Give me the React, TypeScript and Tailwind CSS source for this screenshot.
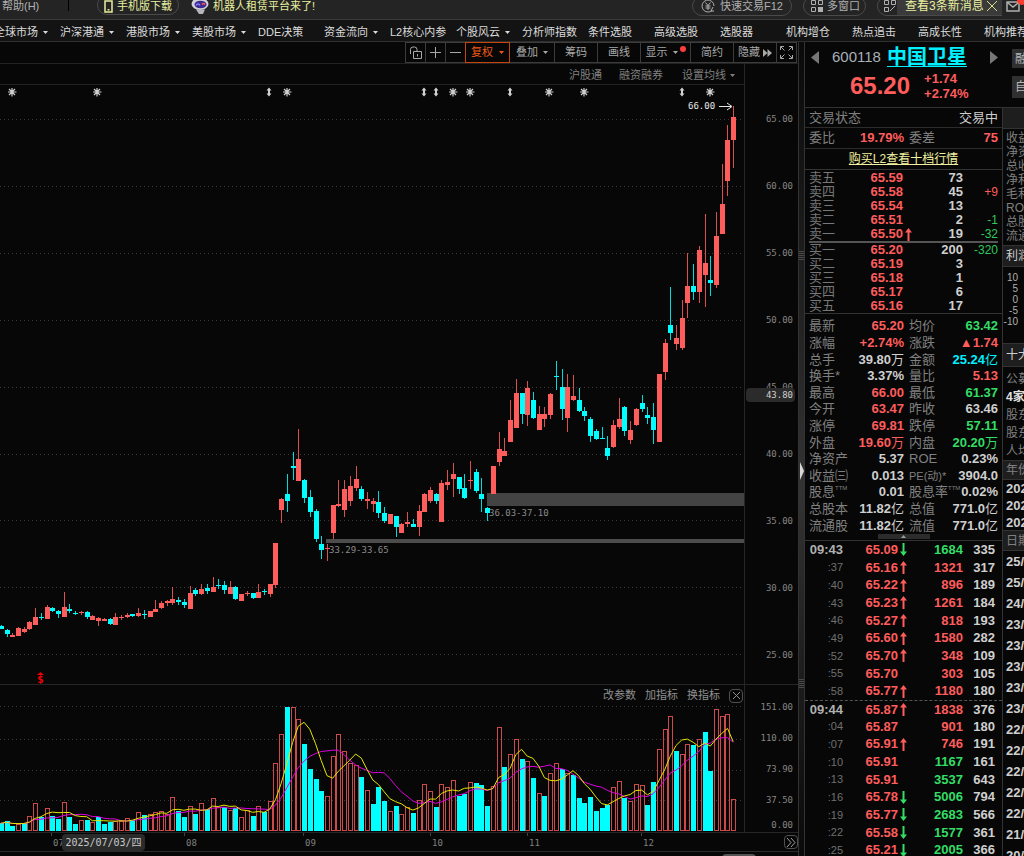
import type { ReactNode } from 'react'

type Tone = 'up' | 'down' | 'flat' | 'cyan'
// [high, body top, body bottom, low, rising, volume bar, volume rising]
type Candle = [number, number, number, number, number, number, number]

const TONES: Record<Tone, string> = {
  up: 'text-[#ff5c5c]',
  down: 'text-[#33dd66]',
  flat: 'text-[#cfcfcf]',
  cyan: 'text-[#00f0ff]',
}

const CANDLES: Candle[] = [
  [625, 626, 629, 629, 0, 23, 0], [629, 630, 634, 637, 0, 29, 0], [633, 635, 637, 637, 1, 16, 0], [627, 628, 636, 636, 1, 21, 1],
  [627, 629, 632, 633, 1, 24, 0], [621, 622, 629, 630, 1, 44, 1], [608, 617, 625, 625, 1, 84, 1], [613, 617, 618, 620, 0, 41, 0],
  [605, 607, 619, 619, 1, 68, 1], [607, 608, 611, 612, 0, 46, 0], [610, 611, 614, 618, 0, 35, 0], [592, 607, 617, 617, 1, 87, 1],
  [604, 609, 611, 613, 0, 41, 0], [611, 613, 614, 615, 0, 22, 0], [611, 612, 613, 615, 1, 32, 1], [611, 612, 617, 619, 0, 33, 0],
  [615, 616, 620, 620, 1, 26, 1], [617, 618, 621, 626, 1, 42, 0], [618, 619, 621, 621, 1, 21, 0], [618, 619, 624, 625, 0, 28, 0],
  [613, 617, 625, 625, 1, 31, 1], [615, 617, 618, 620, 1, 31, 1], [613, 615, 617, 618, 1, 38, 1], [614, 614, 616, 617, 0, 34, 0],
  [608, 613, 616, 617, 1, 56, 1], [610, 614, 615, 619, 0, 49, 0], [611, 611, 617, 617, 1, 51, 1], [600, 609, 612, 612, 1, 56, 1],
  [601, 603, 608, 609, 1, 59, 1], [600, 601, 603, 606, 1, 51, 1], [587, 599, 603, 605, 1, 101, 1], [597, 600, 602, 605, 0, 59, 0],
  [599, 602, 605, 608, 0, 41, 0], [586, 593, 609, 609, 1, 76, 1], [588, 590, 594, 596, 0, 51, 0], [584, 589, 594, 595, 1, 83, 1],
  [584, 588, 591, 594, 0, 65, 0], [577, 587, 592, 592, 1, 98, 1], [579, 585, 586, 589, 0, 71, 1], [581, 585, 590, 594, 0, 72, 0],
  [581, 587, 594, 594, 1, 63, 1], [586, 587, 599, 600, 0, 69, 0], [594, 594, 601, 601, 1, 41, 1], [591, 593, 594, 596, 1, 63, 1],
  [593, 593, 598, 599, 0, 44, 0], [584, 592, 598, 598, 1, 76, 1], [589, 591, 592, 595, 0, 57, 0], [584, 584, 594, 597, 1, 89, 1],
  [543, 543, 585, 588, 1, 203, 1], [498, 499, 510, 523, 1, 291, 1], [474, 494, 501, 512, 0, 371, 0], [452, 466, 468, 480, 0, 373, 1],
  [429, 459, 481, 481, 1, 335, 1], [479, 480, 498, 503, 0, 261, 0], [490, 497, 512, 517, 0, 186, 0], [509, 511, 539, 542, 0, 156, 0],
  [536, 544, 550, 559, 0, 120, 0], [544, 548, 549, 561, 1, 106, 1], [505, 505, 533, 539, 1, 224, 1], [480, 504, 506, 507, 1, 291, 1],
  [480, 489, 510, 517, 1, 239, 1], [476, 486, 501, 506, 1, 203, 1], [466, 479, 488, 491, 1, 198, 1], [486, 489, 499, 501, 0, 162, 0],
  [492, 499, 501, 509, 1, 122, 1], [498, 501, 504, 512, 1, 82, 0], [491, 502, 513, 518, 0, 132, 0], [507, 513, 521, 523, 0, 90, 0],
  [514, 514, 524, 524, 1, 59, 1], [516, 516, 527, 537, 0, 76, 0], [523, 524, 533, 533, 1, 51, 1], [512, 522, 524, 527, 1, 73, 1],
  [519, 524, 527, 527, 0, 55, 0], [505, 511, 527, 536, 1, 92, 1], [493, 494, 512, 512, 1, 140, 1], [487, 490, 501, 503, 1, 120, 1],
  [493, 494, 501, 504, 0, 71, 0], [480, 483, 522, 522, 1, 140, 1], [470, 482, 485, 490, 1, 131, 1], [463, 474, 479, 497, 1, 153, 1],
  [477, 477, 489, 494, 0, 105, 0], [474, 488, 498, 499, 0, 111, 0], [461, 480, 481, 489, 1, 147, 1], [469, 472, 491, 493, 0, 145, 0],
  [478, 494, 499, 512, 0, 137, 0], [507, 508, 513, 521, 0, 74, 0], [466, 466, 494, 494, 1, 134, 1], [432, 449, 462, 466, 1, 311, 1],
  [438, 451, 456, 456, 1, 192, 0], [400, 420, 442, 442, 1, 230, 1], [379, 393, 428, 428, 1, 277, 1], [393, 393, 414, 424, 0, 215, 0],
  [381, 388, 415, 426, 1, 209, 1], [392, 400, 418, 419, 0, 160, 0], [406, 414, 430, 430, 1, 113, 1], [407, 414, 419, 427, 1, 104, 0],
  [393, 394, 415, 419, 1, 173, 1], [361, 376, 377, 390, 0, 203, 1], [369, 387, 409, 420, 0, 186, 0], [374, 387, 418, 432, 1, 174, 1],
  [375, 396, 400, 401, 1, 168, 0], [388, 400, 411, 412, 0, 98, 0], [407, 411, 416, 421, 0, 84, 0], [417, 419, 436, 442, 0, 101, 0],
  [429, 431, 439, 440, 0, 60, 0], [427, 438, 439, 439, 0, 68, 0], [436, 448, 456, 460, 0, 79, 0], [420, 425, 447, 448, 1, 131, 1],
  [398, 419, 427, 429, 1, 150, 1], [406, 407, 431, 436, 0, 98, 0], [421, 430, 440, 444, 1, 89, 1], [408, 409, 425, 426, 1, 140, 1],
  [395, 403, 409, 412, 0, 137, 1], [407, 415, 418, 424, 0, 79, 0], [403, 417, 430, 444, 0, 148, 0], [374, 374, 442, 442, 1, 247, 1],
  [339, 343, 372, 380, 1, 305, 1], [287, 325, 333, 340, 0, 344, 1], [325, 338, 344, 350, 1, 239, 0], [300, 318, 348, 350, 1, 230, 1],
  [253, 286, 303, 318, 1, 260, 1], [264, 286, 292, 300, 0, 258, 0], [246, 250, 292, 303, 1, 277, 1], [214, 263, 275, 307, 1, 297, 0],
  [256, 280, 283, 296, 0, 181, 0], [212, 236, 285, 288, 1, 365, 1], [164, 204, 234, 234, 1, 344, 1], [125, 140, 181, 196, 1, 352, 1],
  [106, 117, 140, 168, 1, 97, 1],
]

const RED = '#ff5c5c'
const CYAN = '#00ffff'
const candleX = (i: number) => 0.8 + i * 5.722
const volumeY = (v: number) => 146 - v / 3

function average(days: number) {
  return CANDLES.map((_, i) => {
    const part = CANDLES.slice(Math.max(0, i - days + 1), i + 1)
    const mean = part.reduce((sum, c) => sum + c[5], 0) / part.length
    return `${candleX(i).toFixed(1)},${volumeY(mean).toFixed(1)}`
  }).join(' ')
}

const NAV = [
  ['全球市场', 1], ['沪深港通', 1], ['港股市场', 1], ['美股市场', 1], ['DDE决策', 0], ['资金流向', 1], ['L2核心内参', 0], ['个股风云', 1],
  ['分析师指数', 0], ['条件选股', 0], ['高级选股', 0], ['选股器', 0], ['机构增仓', 0], ['热点追击', 0], ['高成长性', 0], ['机构推荐', 0],
] as const

const STARS = [12, 97, 287, 453, 470, 549, 584, 710]
const ARROWS = [269, 424, 436, 510, 682]
const PRICES = ['65.00', '60.00', '55.00', '50.00', '45.00', '40.00', '35.00', '30.00', '25.00']
const MONTHS = [
  [51, '07'], [184, '08'], [303, '09'], [430, '10'], [527, '11'], [641, '12'],
] as const

const SELLS = [
  ['卖五', '65.59', '73', ''],
  ['卖四', '65.58', '45', '+9'],
  ['卖三', '65.54', '13', ''],
  ['卖二', '65.51', '2', '-1'],
  ['卖一', '65.50', '19', '-32'],
]
const BUYS = [
  ['买一', '65.20', '200', '-320'],
  ['买二', '65.19', '3', ''],
  ['买三', '65.18', '1', ''],
  ['买四', '65.17', '6', ''],
  ['买五', '65.16', '17', ''],
]

const STATS: Array<[string, string, Tone, string, string, Tone]> = [
  ['最新', '65.20', 'up', '均价', '63.42', 'down'],
  ['涨幅', '+2.74%', 'up', '涨跌', '▲1.74', 'up'],
  ['总手', '39.80万', 'flat', '金额', '25.24亿', 'cyan'],
  ['换手*', '3.37%', 'flat', '量比', '5.13', 'up'],
  ['最高', '66.00', 'up', '最低', '61.37', 'down'],
  ['今开', '63.47', 'up', '昨收', '63.46', 'flat'],
  ['涨停', '69.81', 'up', '跌停', '57.11', 'down'],
  ['外盘', '19.60万', 'up', '内盘', '20.20万', 'down'],
  ['净资产', '5.37', 'flat', 'ROE', '0.23%', 'flat'],
  ['收益㈢', '0.013', 'flat', 'PE(动)*', '3904.0', 'flat'],
  ['股息TTM', '0.01', 'flat', '股息率TTM', '0.02%', 'flat'],
  ['总股本', '11.82亿', 'flat', '总值', '771.0亿', 'flat'],
  ['流通股', '11.82亿', 'flat', '流值', '771.0亿', 'flat'],
]

// time, price, direction, volume, volume tone, orders
const TICKS: Array<[string, string, 'u' | 'd' | '', string, Tone, string]> = [
  ['09:43', '65.09', 'd', '1684', 'down', '335'],
  [':37', '65.16', 'u', '1321', 'up', '317'],
  [':40', '65.22', 'u', '896', 'up', '189'],
  [':43', '65.23', 'u', '1261', 'up', '184'],
  [':46', '65.27', 'u', '818', 'up', '193'],
  [':49', '65.60', 'u', '1580', 'up', '282'],
  [':52', '65.70', 'u', '348', 'up', '109'],
  [':55', '65.70', '', '303', 'up', '105'],
  [':58', '65.77', 'u', '1180', 'up', '180'],
  ['09:44', '65.87', 'u', '1838', 'up', '376'],
  [':04', '65.87', '', '901', 'up', '180'],
  [':07', '65.91', 'u', '746', 'up', '191'],
  [':10', '65.91', '', '1167', 'down', '161'],
  [':13', '65.91', '', '3537', 'down', '643'],
  [':16', '65.78', 'd', '5006', 'down', '794'],
  [':19', '65.77', 'd', '2683', 'down', '566'],
  [':22', '65.58', 'd', '1577', 'down', '361'],
  [':25', '65.21', 'd', '2005', 'down', '366'],
]

const DATES = ['25/', '25/', '24/', '23/', '23/', '23/', '23/', '23/', '22/', '22/', '22/', '22/', '22/', '21/', '20/']

function Caret({ className = '' }: { className?: string }) {
  return (
    <svg className={className} width="5" height="3" viewBox="0 0 5 3" fill="currentColor">
      <path d="M0 0h5L2.5 3z" />
    </svg>
  )
}

function Arrow({ dir }: { dir: 'u' | 'd' }) {
  return (
    <svg
      className={dir === 'u' ? 'text-[#ff5c5c]' : 'rotate-180 text-[#33dd66]'}
      width="7"
      height="13"
      viewBox="0 0 7 13"
      fill="currentColor"
    >
      <path d="M3.5 0L7 4.500H4.5V13h-2V4.500H0z" />
    </svg>
  )
}

function TopBar() {
  const pill = 'flex h-[20px] shrink-0 items-center rounded-full border border-[#4a4a4a]'
  return (
    <header className="relative flex h-[20px] items-start border-b border-[#3a3a3a] bg-[#242424] text-[11px] leading-[12px]">
      <div className="-mt-[5px] flex h-[20px] w-full items-center">
        <button className="ml-[2px] w-[66px] pt-[2px] text-left text-[#b0b0b0]">帮助(H)</button>
        <span className="h-3 w-px bg-black" />
        <button className={`${pill} ml-[28px] w-[82px] pl-[6px] pt-[2px] text-[#e8f0a0]`}>
          <svg width="9" height="13" viewBox="0 0 9 13" fill="none" stroke="currentColor" strokeWidth="1.5">
            <rect x="1" y="1" width="7" height="11" />
            <path d="M3.5 9.8h2" />
          </svg>
          <span className="ml-[4px]">手机版下载</span>
        </button>
        <svg className="ml-[11px]" width="20" height="17" viewBox="0 0 20 17">
          <path d="M2 1l3 3M16 0l-2 3" stroke="#bbb" strokeWidth="2" />
          <ellipse cx="10" cy="7" rx="8.5" ry="6" fill="#cfd0d8" />
          <ellipse cx="10.5" cy="7.5" rx="6" ry="3.8" fill="#3b2a8c" />
          <path d="M6 8.500c1-2 3-2 4 0" stroke="#8a7cff" strokeWidth="1.5" fill="none" />
          <path d="M12 7.500c1-1.500 2-1.500 3 0" stroke="#ff5050" strokeWidth="1.5" fill="none" />
          <path d="M6 12.500h9l-2 4.500H9z" fill="#b5b5bd" />
        </svg>
        <a href="#rent" className="ml-[3px] pt-[2px] text-[#e8f0a0]">机器人租赁平台来了!</a>
        <div className="ml-auto flex items-center gap-[11px] pt-[2px] text-[#b0b0b0]">
          <button className={`${pill} w-[100px] pl-[8px]`}>
            <svg width="14" height="14" viewBox="0 0 14 14" fill="none" stroke="currentColor">
              <path d="M11 11.500A6 6 0 1 1 13 7" />
              <path d="M4.5 3.500L7 6.500l2.500-3M7 6.500V11M4.500 7h5M4.500 9h5M12 8l-2 4h3" />
            </svg>
            <span className="ml-[5px]">快速交易F12</span>
          </button>
          <button className={`${pill} w-[63px] pl-[7px]`}>
            <svg width="12" height="12" viewBox="0 0 12 12" fill="none" stroke="currentColor">
              <path d="M.5.5h4v4h-4zM7.500.5h4v4h-4zM.5 7.500h4v4h-4z" />
              <path d="M7 7h5v5H7z" fill="currentColor" stroke="none" />
            </svg>
            <span className="ml-[4px]">多窗口</span>
          </button>
          <button aria-label="皮肤" className={`${pill} w-[147px] pl-[6px]`}>
            <svg width="12" height="12" viewBox="0 0 12 12" fill="none" stroke="currentColor">
              <path d="M.5.5h4v4h-4zM7.500.5h4v4h-4zM.5 7.500h4v4h-4zM6 11l5-5" />
            </svg>
          </button>
        </div>
      </div>
      <div className="absolute right-0 top-0 flex h-[18px] items-start">
        <div className="flex h-[15px] w-[105px] items-center bg-[#3a3a3a] pb-[4px] pl-[8px] text-[12px] text-[#e8f0a0]">
          <a href="#messages" className="whitespace-nowrap">查看3条新消息</a>
          <button aria-label="关闭" className="ml-[3px]">
            <svg width="10" height="10" viewBox="0 0 10 10" stroke="#d8e090">
              <path d="M0 0l10 10M10 0L0 10" />
            </svg>
          </button>
        </div>
        <div className="relative h-[18px] w-[22px] bg-[#242424] pl-[4px] pt-[1px]">
          <svg width="14" height="11" viewBox="0 0 14 11" fill="none" stroke="#b0b0b0" strokeWidth="1.5">
            <path d="M1 1h12v9H1zM2 2l5 4 5-4" />
          </svg>
          <span className="absolute -right-[3px] -top-[5px] size-2.5 rounded-full bg-[#ff3b30]" />
        </div>
      </div>
    </header>
  )
}

function NavBar() {
  return (
    <nav className="flex h-[22px] items-center overflow-hidden border-b border-[#2e2e2e] bg-[#131313] pt-[3px] text-[11px] text-[#dcdcdc]">
      <div className="-ml-[6px] flex">
        {NAV.map(([label, menu]) => (
          <a key={label} href="#nav" className="flex w-[66px] shrink-0 items-center whitespace-nowrap">
            {label}
            {menu ? <Caret className="ml-[5px]" /> : null}
          </a>
        ))}
      </div>
    </nav>
  )
}

function Tool({ width, label, children }: { width: string; label?: string; children: ReactNode }) {
  return (
    <button aria-label={label} className={`${width} flex items-center justify-center border-l border-[#3c3c3c]`}>
      {children}
    </button>
  )
}

function Toolbar() {
  return (
    <div className="flex h-[22px] justify-end border-b border-[#222] pr-[1px] text-[11px] text-[#a8a8a8]">
      <div className="flex h-[21px] border-y border-r border-[#3c3c3c]">
        <Tool width="w-[20px]" label="锁定">
          <svg width="13" height="13" viewBox="0 0 13 13" fill="none" stroke="currentColor">
            <path d="M4.500 5.500h8v7h-8zM1.500 8V3.500a2.500 2.500 0 0 1 2.500-2.500h1.500a2.500 2.500 0 0 1 2.500 2.500V5M8.500 8v2.500" />
          </svg>
        </Tool>
        <Tool width="w-[20px]" label="放大">
          <svg width="11" height="11" viewBox="0 0 11 11" stroke="currentColor"><path d="M0 5.500h11M5.500 0v11" /></svg>
        </Tool>
        <Tool width="w-[20px]" label="缩小">
          <svg width="11" height="11" viewBox="0 0 11 11" stroke="currentColor"><path d="M0 5.500h11" /></svg>
        </Tool>
        <button className="-my-px flex w-[45px] items-center justify-center gap-[6px] border border-[#c8440c] text-[#f05a14]">
          复权
          <Caret />
        </button>
        <button className="flex w-[44px] items-center justify-center gap-[5px]">
          叠加
          <Caret />
        </button>
        <Tool width="w-[43px]">筹码</Tool>
        <Tool width="w-[43px]">画线</Tool>
        <Tool width="w-[50px]">
          显示
          <Caret className="ml-[5px]" />
          <span className="mb-[7px] ml-[2px] size-[6px] rounded-full bg-[#ff3c3c]" />
        </Tool>
        <Tool width="w-[43px]">简约</Tool>
        <Tool width="w-[43px]">
          隐藏
          <svg className="ml-[3px]" width="9" height="8" viewBox="0 0 9 8" fill="currentColor">
            <path d="M0 0l4.500 4L0 8zM4.500 0L9 4 4.500 8z" />
          </svg>
        </Tool>
        <Tool width="w-[20px]" label="全屏">
          <svg width="13" height="13" viewBox="0 0 13 13" fill="none" stroke="currentColor">
            <path d="M.5 4V.5H4M9 .5h3.500V4M12.500 9v3.500H9M4 12.500H.5V9M1 1l3.500 3.500M12 1L8.500 4.500M12 12L8.500 8.500M1 12l3.500-3.500" />
          </svg>
        </Tool>
      </div>
    </div>
  )
}

function PricePlot() {
  return (
    <svg
      className="block h-full w-full font-['DejaVu_Sans_Mono',monospace] text-[9px]"
      viewBox="0 85 744 599"
      preserveAspectRatio="xMaxYMin slice"
    >
      {PRICES.map((p, i) => (
        <path key={p} d={`M0 ${119.5 + Math.round(i * 66.9)}H744`} stroke="#3a3a3a" strokeDasharray="1 3" />
      ))}
      {STARS.map((x) => (
        <path key={x} d={`M${x} 88v8.500M${x - 4} 92h8.500M${x - 3} 89l6 6M${x + 3} 89l-6 6`} stroke="#d0d0d0" strokeWidth="1.2" />
      ))}
      {ARROWS.map((x) => (
        <path key={x} d={`M${x} 87.500l2.500 3h-1.500v3h1.500l-2.500 3-2.500-3h1.500v-3h-1.500z`} fill="#d0d0d0" />
      ))}
      <rect x="487" y="493" width="257" height="13" fill="#434343" />
      <rect x="326" y="539" width="418" height="4" fill="#4c4c4c" />
      {CANDLES.map(([high, top, bottom, low, up], i) => {
        const x = Math.round(candleX(i)) + 0.5
        const color = up ? RED : CYAN
        return (
          <g key={i} fill={color}>
            <rect x={x - 0.5} y={high} width="1" height={low - high} opacity="0.85" />
            <rect x={x - 2.5} y={top} width="5" height={Math.max(1, bottom - top)} />
          </g>
        )
      })}
      <text x="329" y="553" fill="#8a8a8a">33.29-33.65</text>
      <text x="489" y="516" fill="#8a8a8a">36.03-37.10</text>
      <text x="688" y="109" fill="#e8e8e8">66.00</text>
      <path d="M719 106.500h12M727 103l5 3.500-5 3.500" stroke="#e8e8e8" fill="none" />
      <path d="M40.500 672l3.500 3h-7z" fill="#f00000" />
      <text x="37" y="683" fill="#f00000" className="text-[11px] font-bold">$</text>
    </svg>
  )
}

function VolumePlot() {
  return (
    <svg className="block h-full w-full" viewBox="0 0 744 147" preserveAspectRatio="xMaxYMin slice">
      {[21.5, 54.5, 85.5, 115.5].map((y) => (
        <path key={y} d={`M0 ${y}H744`} stroke="#3a3a3a" strokeDasharray="1 3" />
      ))}
      {CANDLES.map(([, , , , , volume, up], i) => {
        const x = Math.round(candleX(i)) + 0.5
        const y = Math.round(volumeY(volume))
        return up ? (
          <rect key={i} x={x - 2} y={y + 0.5} width="4" height={145 - y} fill="none" stroke="#cc4a4a" />
        ) : (
          <rect key={i} x={x - 2.5} y={y} width="5" height={146 - y} fill={CYAN} />
        )
      })}
      <polyline points={average(10)} fill="none" stroke="#e000e0" />
      <polyline points={average(5)} fill="none" stroke="#e6e600" />
    </svg>
  )
}

function ChartPanel() {
  return (
    <section className="flex min-w-0 flex-1 flex-col overflow-hidden bg-[#070707]">
      <Toolbar />
      <div className="flex h-[621px] border-b border-[#262626]">
        <div className="flex min-w-0 flex-1 flex-col">
          <div className="flex h-[21px] shrink-0 items-center justify-end border-b border-[#222] pr-[9px] pt-[2px] text-[11px] text-[#808080]">
            <button>沪股通</button>
            <button className="ml-[17px]">融资融券</button>
            <button className="ml-[19px] flex items-center gap-[4px]">
              设置均线
              <Caret />
            </button>
          </div>
          <div className="min-h-0 flex-1">
            <PricePlot />
          </div>
        </div>
        <div className="relative w-[54px] shrink-0 overflow-hidden border-l border-[#262626] pt-[22px] text-right font-['DejaVu_Sans_Mono',monospace] text-[9px] text-[#858585]">
          {PRICES.map((p) => (
            <div key={p} className="flex h-[67px] items-center justify-end pr-[5px]">{p}</div>
          ))}
          <div className="absolute left-[1px] right-[3px] top-[324px] rounded-sm bg-[#2b2b2b] pr-[2px] leading-[14px] text-[#d0d0d0]">43.80</div>
        </div>
      </div>
      <div className="relative flex h-[148px] border-b border-[#262626]">
        <div className="min-w-0 flex-1">
          <VolumePlot />
        </div>
        <div className="flex w-[54px] shrink-0 flex-col border-l border-[#262626] pr-[5px] pt-[7px] text-right font-['DejaVu_Sans_Mono',monospace] text-[9px] leading-[31px] text-[#858585]">
          <span>151.00</span>
          <span>110.00</span>
          <span>73.90</span>
          <span>37.50</span>
          <span className="leading-[18px]">0.00</span>
        </div>
        <div className="absolute right-[55px] top-[3px] flex h-[15px] items-center gap-[9px] text-[11px] text-[#909090]">
          <button>改参数</button>
          <button>加指标</button>
          <button>换指标</button>
          <button aria-label="关闭" className="flex size-[14px] items-center justify-center rounded-sm border border-[#505050]">
            <svg width="7" height="7" viewBox="0 0 7 7" stroke="#909090"><path d="M0 0l7 7M7 0L0 7" /></svg>
          </button>
        </div>
      </div>
      <div className="relative flex h-[19px] border-b border-[#2c2c2c]">
        <svg
          className="block h-full min-w-0 flex-1 font-['DejaVu_Sans_Mono',monospace] text-[9px]"
          viewBox="0 0 744 18"
          preserveAspectRatio="xMaxYMin slice"
        >
          {MONTHS.map(([x, label]) => (
            <g key={label}>
              <path d={`M${x + 0.5} 0v3`} stroke="#444" />
              <text x={x + 2} y="13" fill="#808080">{label}</text>
            </g>
          ))}
        </svg>
        <div className="flex w-[54px] items-center justify-end">
          <button aria-label="更多" className="flex size-[14px] items-center justify-center rounded-sm border border-[#505050]">
            <svg width="10" height="9" viewBox="0 0 10 9" fill="none" stroke="#a0a0a0"><path d="M1 0l4 4.500L1 9M5 0l4 4.500L5 9" /></svg>
          </button>
        </div>
        <div className="absolute left-[62px] top-[1px] flex h-[17px] w-[83px] items-center justify-center rounded-sm bg-[#2b2b2b] font-['DejaVu_Sans_Mono','Noto_Sans_CJK_SC',monospace] text-[10px] text-[#c8c8c8]">
          2025/07/03/四
        </div>
      </div>
      <div className="flex flex-1 justify-end pr-[42px] pt-[2px]">
        <div className="h-[8px] w-[34px] rounded-sm bg-[#555]" />
      </div>
    </section>
  )
}

function Splitter() {
  return (
    <div className="relative w-[7px] shrink-0 border-x border-[#333] bg-linear-to-b from-[#0a0a0a] via-[#333] via-55% to-[#0a0a0a]">
      <svg className="absolute left-[1px] top-[420px]" width="4" height="18" viewBox="0 0 4 18"><path d="M0 0l4 9-4 9z" fill="#d8d8d8" /></svg>
      <svg className="absolute left-0 top-[209px]" width="5" height="9" viewBox="0 0 5 9"><path d="M1 0v9M3 0v9M5 0v9" stroke="#777" strokeDasharray="1 1" /></svg>
      <svg className="absolute left-0 top-[637px]" width="5" height="9" viewBox="0 0 5 9"><path d="M1 0v9M3 0v9M5 0v9" stroke="#777" strokeDasharray="1 1" /></svg>
    </div>
  )
}

function QuoteHeader() {
  return (
    <div className="flex h-[66px] border-b border-[#333] pt-[4px]">
      <div className="w-[198px]">
        <div className="flex h-[22px] items-center">
          <button aria-label="上一只" className="ml-[6px]">
            <svg width="8" height="13" viewBox="0 0 8 13" fill="#777"><path d="M8 0v13L0 6.500z" /></svg>
          </button>
          <span className="ml-[13px] text-[15px] text-[#a8b0b8]">600118</span>
          <a href="#stock" className="ml-[6px] text-[20px] font-bold leading-[22px] text-[#00f0ff] underline decoration-1 underline-offset-2">中国卫星</a>
          <button aria-label="下一只" className="ml-auto mr-[5px]">
            <svg width="8" height="13" viewBox="0 0 8 13" fill="#777"><path d="M0 0v13l8-6.500z" /></svg>
          </button>
        </div>
        <div className="flex items-center gap-[14px] pl-[45px] font-bold text-[#ff5c5c]">
          <span className="text-[24px]">65.20</span>
          <span className="text-[13px] leading-[15px]">
            +1.74
            <br />
            +2.74%
          </span>
        </div>
      </div>
      <div className="flex flex-1 flex-col gap-[8px] overflow-hidden pl-[9px] pt-[3px] text-[12px] text-[#b8b8b8]">
        <button className="h-[19px] w-[20px] shrink-0 bg-[#303030] pl-[3px] text-left">融</button>
        <button className="h-[22px] w-[20px] shrink-0 bg-[#303030] pl-[3px] text-left">自</button>
      </div>
    </div>
  )
}

function DepthTable({ rows }: { rows: string[][] }) {
  return (
    <table className="w-full table-fixed border-collapse text-[13px] leading-[14px]">
      <tbody>
        {rows.map(([label, price, qty, diff]) => (
          <tr key={label} className="h-[14px]">
            <td className="h-[14px] w-[40px] p-0 pl-[4px] text-[#777]">{label}</td>
            <td className="w-[58px] p-0 text-right font-bold text-[#ff5c5c]">{price}</td>
            <td className="w-[12px] p-0 pl-[2px]">{label === '卖一' ? <Arrow dir="u" /> : null}</td>
            <td className="w-[48px] p-0 text-right font-bold text-[#cfcfcf]">{qty}</td>
            <td className={`p-0 pr-[4px] text-right text-[12px] ${diff.startsWith('+') ? 'text-[#ff5c5c]' : 'text-[#2fc85c]'}`}>{diff}</td>
          </tr>
        ))}
      </tbody>
    </table>
  )
}

function StatLabel({ text }: { text: string }) {
  const ttm = text.endsWith('TTM')
  return (
    <>
      {ttm ? text.slice(0, -3) : text}
      {ttm && <sup className="-top-[6px] text-[6px]">TTM</sup>}
    </>
  )
}

// The unit after a figure keeps the regular weight.
function Value({ text }: { text: string }) {
  const unit = /[万亿]$/.test(text) ? text.slice(-1) : ''
  return (
    <>
      {unit ? text.slice(0, -1) : text}
      {unit && <span className="font-normal">{unit}</span>}
    </>
  )
}

function QuotePanel() {
  return (
    <section className="w-[198px] shrink-0 overflow-hidden border-r border-[#333] text-[13px]">
      <div className="flex h-[20px] items-center justify-between border-b border-[#2c2c2c] px-[4px]">
        <span className="text-[#808080]">交易状态</span>
        <span className="text-[#cfcfcf]">交易中</span>
      </div>
      <div className="flex h-[21px] items-center border-b border-[#2c2c2c] px-[4px] text-[#808080]">
        委比
        <b className="w-[69px] text-right text-[#ff5c5c]">19.79%</b>
        <span className="ml-[5px]">委差</span>
        <b className="ml-auto text-[#ff5c5c]">75</b>
      </div>
      <div className="flex h-[21px] items-center justify-center border-b border-[#333] text-[12px]">
        <a href="#level2" className="text-[#f0f0a0] underline underline-offset-1">购买L2查看十档行情</a>
      </div>
      <div className="pt-[1px]">
        <DepthTable rows={SELLS} />
        <div className="mx-[4px] h-[2px] bg-[#555]" />
        <DepthTable rows={BUYS} />
      </div>
      <dl className="grid h-[221px] auto-rows-fr border-t border-[#333] pt-[4px] leading-[16px]">
        {STATS.map(([a, av, at, b, bv, bt]) => (
          <div key={a} className="flex items-center whitespace-nowrap px-[4px]">
            <dt className="w-[42px] text-[#808080]"><StatLabel text={a} /></dt>
            <dd className={`w-[53px] text-right font-bold ${TONES[at]}`}><Value text={av} /></dd>
            <dt className={`ml-[5px] text-[#808080] ${b.startsWith('PE') ? 'text-[11px]' : ''}`}><StatLabel text={b} /></dt>
            <dd className={`ml-auto text-right font-bold ${TONES[bt]}`}><Value text={bv} /></dd>
          </div>
        ))}
      </dl>
      <button aria-label="收起" className="mx-auto flex h-[5px] w-[52px] items-center justify-center bg-[#2c2c2c]">
        <Caret className="rotate-180 text-[#999]" />
      </button>
      <ul className="mt-px grid h-[319px] auto-rows-fr border-t border-[#333] font-bold">
        {TICKS.map(([time, price, dir, volume, tone, orders], i) => (
          <li key={i} className={`flex items-center ${i === 9 ? 'border-t border-dashed border-[#555]' : ''}`}>
            <span className={time.startsWith(':') ? 'w-[38px] text-right text-[11px] font-normal text-[#707070]' : 'w-[38px] text-right text-[#b0b0b0]'}>{time}</span>
            <span className="w-[55px] text-right text-[#ff5c5c]">{price}</span>
            <span className="w-[12px] pl-[2px]">{dir && <Arrow dir={dir} />}</span>
            <span className={`w-[53px] text-right ${TONES[tone]}`}>{volume}</span>
            <span className="w-[32px] text-right text-[#cfcfcf]">{orders}</span>
          </li>
        ))}
      </ul>
    </section>
  )
}

function SidePanel() {
  const bar = 'flex shrink-0 items-center border-y border-[#333] bg-[#1e1e1e] pl-[3px]'
  return (
    <aside className="min-w-0 flex-1 overflow-hidden whitespace-nowrap text-[12px] text-[#808080]">
      <div className="h-[21px] border-b border-[#333] bg-[#1e1e1e]" />
      <div className="flex h-[116px] flex-col pl-[3px] pt-[2px] leading-[14px]">
        {['收益', '净资', '总收', '净利', '毛利', 'ROE', '总股', '流通'].map((s) => (
          <span key={s}>{s}</span>
        ))}
      </div>
      <div className={`${bar} h-[22px] text-[#cfcfcf]`}>利润</div>
      <div className="flex h-[76px] flex-col pr-[6px] pt-[5px] text-right text-[10px] leading-[11px] text-[#b0b0b0]">
        {['10', '5', '0', '-5', '-10'].map((s) => (
          <span key={s}>{s}</span>
        ))}
      </div>
      <div className={`${bar} h-[24px] text-[#cfcfcf]`}>十大</div>
      <div className="flex h-[93px] flex-col pl-[3px] pt-[3px] leading-[18px]">
        <span>公募</span>
        <b className="text-[#e0e0e0]">4家</b>
        <span>股东</span>
        <span>股东</span>
        <span>人均</span>
      </div>
      <div className={`${bar} h-[20px]`}>年份</div>
      <div className="flex h-[50px] flex-col pl-[3px] text-[13px] font-bold leading-[17px] text-[#cfcfcf]">
        <span>2025</span>
        <span>2024</span>
        <span>2023</span>
      </div>
      <div className={`${bar} h-[21px]`}>日期</div>
      <div className="flex flex-col pl-[3px] text-[13px] font-bold leading-[21px] text-[#cfcfcf]">
        {DATES.map((d, i) => (
          <span key={i}>{d}</span>
        ))}
      </div>
    </aside>
  )
}

export default function App() {
  return (
    <div className="flex h-screen flex-col overflow-hidden bg-[#070707] font-['Liberation_Sans','Noto_Sans_CJK_SC',sans-serif]">
      <TopBar />
      <NavBar />
      <main className="flex min-h-0 flex-1">
        <ChartPanel />
        <Splitter />
        <div className="flex w-[219px] shrink-0 flex-col overflow-hidden">
          <QuoteHeader />
          <div className="flex min-h-0 flex-1">
            <QuotePanel />
            <SidePanel />
          </div>
        </div>
      </main>
    </div>
  )
}
